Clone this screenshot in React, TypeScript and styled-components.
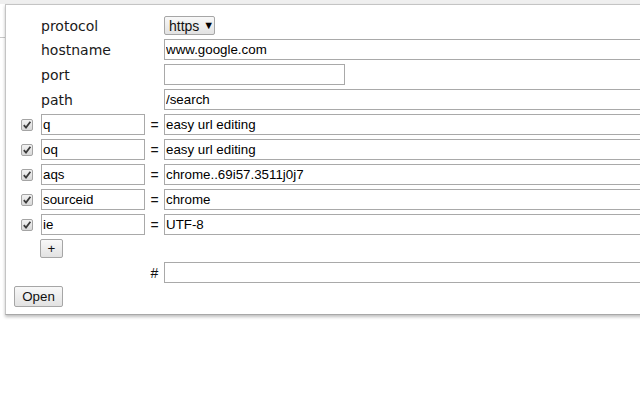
import React from "react";
import styled, { createGlobalStyle } from "styled-components";

const Global = createGlobalStyle`
  html, body { margin: 0; padding: 0; }
  body {
    width: 640px;
    height: 400px;
    overflow: hidden;
    background:
      linear-gradient(#c8c8c8, #c8c8c8) 0 37px / 5px 1px no-repeat,
      #ffffff;
    font-family: "Liberation Sans", Arial, sans-serif;
  }
`;

const TopStrip = styled.div`
  height: 4px;
  background: #efefef;
`;

const Panel = styled.div`
  width: 720px;
  margin-left: 5px;
  background: #fff;
  border-top: 1px solid #c4c4c4;
  border-left: 1px solid #c4c4c4;
  border-bottom: 1px solid #a8a8a8;
  box-shadow: 0 2px 3px rgba(0, 0, 0, 0.25);
  padding: 9px 0 7px 8px;
  box-sizing: border-box;
`;

const Form = styled.div`
  display: grid;
  margin-left: 7px;
  grid-template-columns: 12px 112px 19px 520px;
  grid-template-rows: 23px repeat(8, 25px) 23px 25px;
  align-items: center;
`;

const CheckCell = styled.div`
  display: flex;
  align-items: center;
`;

const KeyCell = styled.div`
  padding-left: 8px;
  display: flex;
  align-items: center;
`;

const Label = styled.span`
  font-family: "DejaVu Sans", sans-serif;
  font-size: 14px;
  color: #1a1a1a;
`;

const Sym = styled.span`
  font-family: "Liberation Sans", Arial, sans-serif;
  font-size: 14px;
  color: #111;
  text-align: center;
`;

const Input = styled.input<{ $w?: number }>`
  box-sizing: border-box;
  height: 21px;
  width: ${(p) => (p.$w ? `${p.$w}px` : "100%")};
  margin: 0;
  border: 1px solid #a9a9a9;
  border-radius: 0;
  padding: 0 1px;
  font-family: "Liberation Sans", Arial, sans-serif;
  font-size: 13.33px;
  color: #000;
  background: #fff;
  outline: none;
`;

const Btn = styled.button<{ $w: number; $h: number }>`
  box-sizing: border-box;
  width: ${(p) => p.$w}px;
  height: ${(p) => p.$h}px;
  margin: 0;
  padding: 0;
  border: 1px solid #a6a6a6;
  border-radius: 2px;
  background: linear-gradient(#f8f8f8, #e2e2e2);
  font-family: "Liberation Sans", Arial, sans-serif;
  font-size: 13.33px;
  color: #111;
  display: flex;
  align-items: center;
  justify-content: center;
  gap: 4px;
`;

const SelectBtn = styled(Btn)`
  justify-content: flex-start;
  padding-left: 4px;
  font-size: 14px;
`;

const Arrow = styled.span`
  font-size: 11px;
  color: #000;
  margin-top: -2px;
`;

const PlusBtn = styled(Btn)`
  margin-left: -1px;
`;

const OpenRow = styled.div`
  margin-top: 1px;
`;

const CheckBox = styled.span`
  box-sizing: border-box;
  width: 12px;
  height: 12px;
  border: 1px solid #a4a4a4;
  border-radius: 2px;
  background: linear-gradient(#f2f2f2, #d8d8d8);
  display: flex;
  align-items: center;
  justify-content: center;
`;

const Check = () => (
  <CheckBox>
    <svg width="10" height="10" viewBox="0 0 10 10">
      <path d="M1.8 5.2 L4 7.6 L8.4 1.8" fill="none" stroke="#3a3a3a" strokeWidth="1.8" />
    </svg>
  </CheckBox>
);

const params: [string, string][] = [
  ["q", "easy url editing"],
  ["oq", "easy url editing"],
  ["aqs", "chrome..69i57.3511j0j7"],
  ["sourceid", "chrome"],
  ["ie", "UTF-8"],
];

export default function App() {
  return (
    <>
      <Global />
      <TopStrip />
      <Panel>
        <Form>
          <span />
          <KeyCell><Label>protocol</Label></KeyCell>
          <span />
          <div>
            <SelectBtn $w={51} $h={19}>
              https <Arrow>▼</Arrow>
            </SelectBtn>
          </div>

          <span />
          <KeyCell><Label>hostname</Label></KeyCell>
          <span />
          <Input defaultValue="www.google.com" />

          <span />
          <KeyCell><Label>port</Label></KeyCell>
          <span />
          <Input $w={181} defaultValue="" />

          <span />
          <KeyCell><Label>path</Label></KeyCell>
          <span />
          <Input defaultValue="/search" />

          {params.map(([k, v]) => (
            <React.Fragment key={k}>
              <CheckCell><Check /></CheckCell>
              <KeyCell><Input $w={104} defaultValue={k} /></KeyCell>
              <Sym>=</Sym>
              <Input defaultValue={v} />
            </React.Fragment>
          ))}

          <span />
          <KeyCell>
            <PlusBtn $w={23} $h={19}>+</PlusBtn>
          </KeyCell>
          <span />
          <span />

          <span />
          <span />
          <Sym>#</Sym>
          <Input defaultValue="" />
        </Form>
        <OpenRow>
          <Btn $w={49} $h={21}>Open</Btn>
        </OpenRow>
      </Panel>
    </>
  );
}
